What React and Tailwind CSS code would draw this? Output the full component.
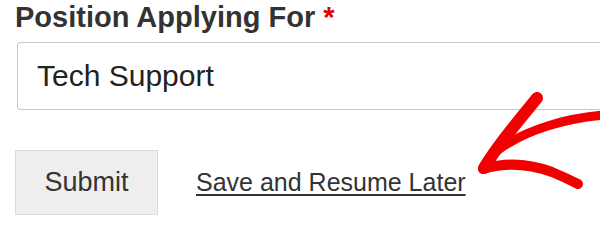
import React from 'react';

const font = { fontFamily: '"Liberation Sans", Arial, sans-serif' };

// hand-drawn red arrow pointing at the link
const Arrow = () => (
  <svg className="absolute left-0 top-0 pointer-events-none" width="600" height="222" viewBox="0 0 600 222">
    <g fill="none" stroke="#f00000" strokeLinecap="round" strokeLinejoin="round">
      <path d="M537 98 C522 117 500 141 484 168" strokeWidth="12" />
      <path d="M604 115 C568 118 527 129 498 150" strokeWidth="9" />
      <path d="M483 169 C506 162 530 164 552 172 C564 177 572 181 578 184" strokeWidth="10" />
    </g>
  </svg>
);

export default function App() {
  return (
    <div className="relative w-[600px] h-[222px] overflow-hidden bg-white" style={font}>
      <div className="pl-[15px]">
        <label className="block text-[29px] leading-[34px] font-bold text-[#333]">
          Position Applying For <span className="text-[#e00000]">*</span>
        </label>
        <input
          type="text"
          defaultValue="Tech Support"
          className="mt-[8px] ml-[2px] block w-[640px] h-[68px] border border-[#c8c8c8] rounded-[3px] pl-[19px] text-[30px] text-[#222] bg-white outline-none"
        />
        <div className="mt-[40px] flex items-center gap-[38px]">
          <button className="w-[143px] h-[65px] bg-[#eeeeee] border border-[#dadada] text-[27px] text-[#333]">
            Submit
          </button>
          <a href="#" className="text-[25px] text-[#333] underline underline-offset-[3px]">
            Save and Resume Later
          </a>
        </div>
      </div>
      <Arrow />
    </div>
  );
}
